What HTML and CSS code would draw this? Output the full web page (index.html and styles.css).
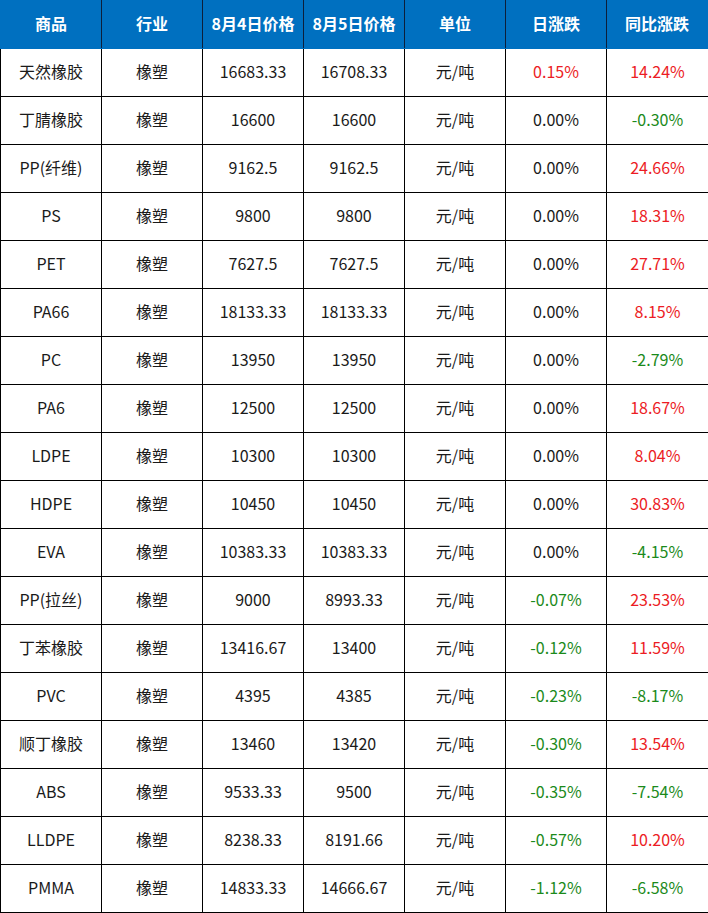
FILE: index.html
```html
<!DOCTYPE html>
<html lang="zh-CN">
<head>
<meta charset="utf-8">
<title>橡塑价格</title>
<link rel="stylesheet" href="styles.css">
</head>
<body>
<div class="table">
  <div class="row head">
    <div class="cell">商品</div><div class="cell">行业</div><div class="cell">8月4日价格</div><div class="cell">8月5日价格</div><div class="cell">单位</div><div class="cell">日涨跌</div><div class="cell">同比涨跌</div>
  </div>
  <div class="row"><div class="cell">天然橡胶</div><div class="cell">橡塑</div><div class="cell">16683.33</div><div class="cell">16708.33</div><div class="cell">元/吨</div><div class="cell up">0.15%</div><div class="cell up">14.24%</div></div>
  <div class="row"><div class="cell">丁腈橡胶</div><div class="cell">橡塑</div><div class="cell">16600</div><div class="cell">16600</div><div class="cell">元/吨</div><div class="cell">0.00%</div><div class="cell down">-0.30%</div></div>
  <div class="row"><div class="cell">PP(纤维)</div><div class="cell">橡塑</div><div class="cell">9162.5</div><div class="cell">9162.5</div><div class="cell">元/吨</div><div class="cell">0.00%</div><div class="cell up">24.66%</div></div>
  <div class="row"><div class="cell">PS</div><div class="cell">橡塑</div><div class="cell">9800</div><div class="cell">9800</div><div class="cell">元/吨</div><div class="cell">0.00%</div><div class="cell up">18.31%</div></div>
  <div class="row"><div class="cell">PET</div><div class="cell">橡塑</div><div class="cell">7627.5</div><div class="cell">7627.5</div><div class="cell">元/吨</div><div class="cell">0.00%</div><div class="cell up">27.71%</div></div>
  <div class="row"><div class="cell">PA66</div><div class="cell">橡塑</div><div class="cell">18133.33</div><div class="cell">18133.33</div><div class="cell">元/吨</div><div class="cell">0.00%</div><div class="cell up">8.15%</div></div>
  <div class="row"><div class="cell">PC</div><div class="cell">橡塑</div><div class="cell">13950</div><div class="cell">13950</div><div class="cell">元/吨</div><div class="cell">0.00%</div><div class="cell down">-2.79%</div></div>
  <div class="row"><div class="cell">PA6</div><div class="cell">橡塑</div><div class="cell">12500</div><div class="cell">12500</div><div class="cell">元/吨</div><div class="cell">0.00%</div><div class="cell up">18.67%</div></div>
  <div class="row"><div class="cell">LDPE</div><div class="cell">橡塑</div><div class="cell">10300</div><div class="cell">10300</div><div class="cell">元/吨</div><div class="cell">0.00%</div><div class="cell up">8.04%</div></div>
  <div class="row"><div class="cell">HDPE</div><div class="cell">橡塑</div><div class="cell">10450</div><div class="cell">10450</div><div class="cell">元/吨</div><div class="cell">0.00%</div><div class="cell up">30.83%</div></div>
  <div class="row"><div class="cell">EVA</div><div class="cell">橡塑</div><div class="cell">10383.33</div><div class="cell">10383.33</div><div class="cell">元/吨</div><div class="cell">0.00%</div><div class="cell down">-4.15%</div></div>
  <div class="row"><div class="cell">PP(拉丝)</div><div class="cell">橡塑</div><div class="cell">9000</div><div class="cell">8993.33</div><div class="cell">元/吨</div><div class="cell down">-0.07%</div><div class="cell up">23.53%</div></div>
  <div class="row"><div class="cell">丁苯橡胶</div><div class="cell">橡塑</div><div class="cell">13416.67</div><div class="cell">13400</div><div class="cell">元/吨</div><div class="cell down">-0.12%</div><div class="cell up">11.59%</div></div>
  <div class="row"><div class="cell">PVC</div><div class="cell">橡塑</div><div class="cell">4395</div><div class="cell">4385</div><div class="cell">元/吨</div><div class="cell down">-0.23%</div><div class="cell down">-8.17%</div></div>
  <div class="row"><div class="cell">顺丁橡胶</div><div class="cell">橡塑</div><div class="cell">13460</div><div class="cell">13420</div><div class="cell">元/吨</div><div class="cell down">-0.30%</div><div class="cell up">13.54%</div></div>
  <div class="row"><div class="cell">ABS</div><div class="cell">橡塑</div><div class="cell">9533.33</div><div class="cell">9500</div><div class="cell">元/吨</div><div class="cell down">-0.35%</div><div class="cell down">-7.54%</div></div>
  <div class="row"><div class="cell">LLDPE</div><div class="cell">橡塑</div><div class="cell">8238.33</div><div class="cell">8191.66</div><div class="cell">元/吨</div><div class="cell down">-0.57%</div><div class="cell up">10.20%</div></div>
  <div class="row"><div class="cell">PMMA</div><div class="cell">橡塑</div><div class="cell">14833.33</div><div class="cell">14666.67</div><div class="cell">元/吨</div><div class="cell down">-1.12%</div><div class="cell down">-6.58%</div></div>
</div>
</body>
</html>
```

FILE: styles.css
```css
html, body {
  margin: 0;
  padding: 0;
  background: #ffffff;
}

body {
  font-family: "Noto Sans CJK SC", "Noto Sans", sans-serif;
  font-size: 16px;
  color: #1a1a1a;
}

.table {
  width: 708px;
}

.row {
  display: grid;
  grid-template-columns: 102px repeat(5, 101px) 1fr;
  height: 48px;
  box-sizing: border-box;
  border-bottom: 1px solid #000000;
}

.cell {
  display: flex;
  align-items: center;
  justify-content: center;
  box-sizing: border-box;
  border-right: 1px solid #000000;
  white-space: nowrap;
  padding-bottom: 3px;
}

.cell:first-child {
  border-left: 1px solid #000000;
}

.cell:last-child {
  border-right: none;
}

.head {
  height: 49px;
  background: #0070c0;
  border-bottom: 1px solid #0070c0;
  color: #ffffff;
  font-weight: 700;
}

.head .cell {
  border-right-color: #0d1f3a;
  padding-bottom: 2px;
}

.head .cell:first-child {
  border-left-color: #0070c0;
}

.head .cell:last-child {
  margin-right: 1px;
}

.up {
  color: #ec1c24;
}

.down {
  color: #1b8a1b;
}
```
